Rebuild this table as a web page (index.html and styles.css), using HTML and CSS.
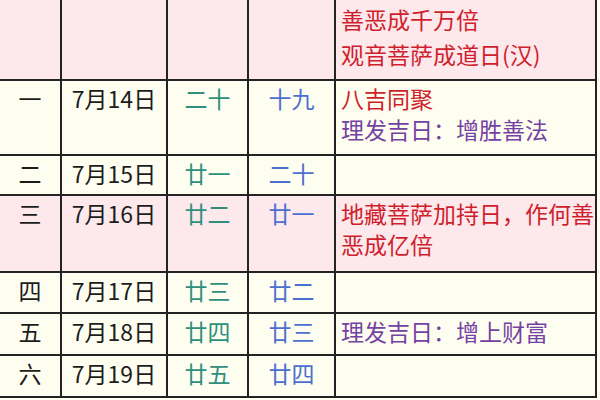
FILE: index.html
```html
<!DOCTYPE html>
<html lang="zh">
<head>
<meta charset="utf-8">
<link rel="stylesheet" href="styles.css">
</head>
<body>
<div class="cal">
  <div class="c pink"></div>
  <div class="c pink"></div>
  <div class="c pink"></div>
  <div class="c pink"></div>
  <div class="c pink note red first">善恶成千万倍<br>观音菩萨成道日(汉)</div>

  <div class="c cream wd">一</div>
  <div class="c cream dt">7月14日</div>
  <div class="c cream lu">二十</div>
  <div class="c cream lu2">十九</div>
  <div class="c cream note"><span class="red">八吉同聚</span><br><span class="purple">理发吉日：增胜善法</span></div>

  <div class="c cream wd">二</div>
  <div class="c cream dt">7月15日</div>
  <div class="c cream lu">廿一</div>
  <div class="c cream lu2">二十</div>
  <div class="c cream note"></div>

  <div class="c pink wd">三</div>
  <div class="c pink dt">7月16日</div>
  <div class="c pink lu">廿二</div>
  <div class="c pink lu2">廿一</div>
  <div class="c pink note red">地藏菩萨加持日，作何善<br>恶成亿倍</div>

  <div class="c cream wd">四</div>
  <div class="c cream dt">7月17日</div>
  <div class="c cream lu">廿三</div>
  <div class="c cream lu2">廿二</div>
  <div class="c cream note"></div>

  <div class="c cream wd">五</div>
  <div class="c cream dt">7月18日</div>
  <div class="c cream lu">廿四</div>
  <div class="c cream lu2">廿三</div>
  <div class="c cream note purple">理发吉日：增上财富</div>

  <div class="c cream wd">六</div>
  <div class="c cream dt">7月19日</div>
  <div class="c cream lu">廿五</div>
  <div class="c cream lu2">廿四</div>
  <div class="c cream note"></div>
</div>
</body>
</html>
```
FILE: styles.css
```css
html, body {
  margin: 0;
  padding: 0;
  width: 600px;
  height: 400px;
  overflow: hidden;
  background: #fefef2;
}
.cal {
  display: grid;
  grid-template-columns: 60px 104px 79px 85px 259px;
  grid-template-rows: 104px 73px 38px 75px 39px 40px 40px;
  gap: 2px;
  background: #232323;
  border: 2px solid #232323;
  width: max-content;
  margin: -27px 0 0 -2px;
  font-family: "Noto Sans CJK SC", "Noto Sans", sans-serif;
  font-size: 23px;
  line-height: 31px;
  color: #1c1c1c;
}
.c {
  padding-top: 2px;
  text-align: center;
  white-space: nowrap;
  overflow: hidden;
}
.pink { background: #fde8ec; }
.cream { background: #fefef0; }
.lu { color: #2f8f7e; }
.lu2 { color: #4d6fcf; }
.note {
  text-align: left;
  padding-left: 5px;
}
.note.first {
  padding-top: 27px;
  line-height: 35px;
}
.red { color: #cf1f2d; }
.purple { color: #7442a3; }
```
